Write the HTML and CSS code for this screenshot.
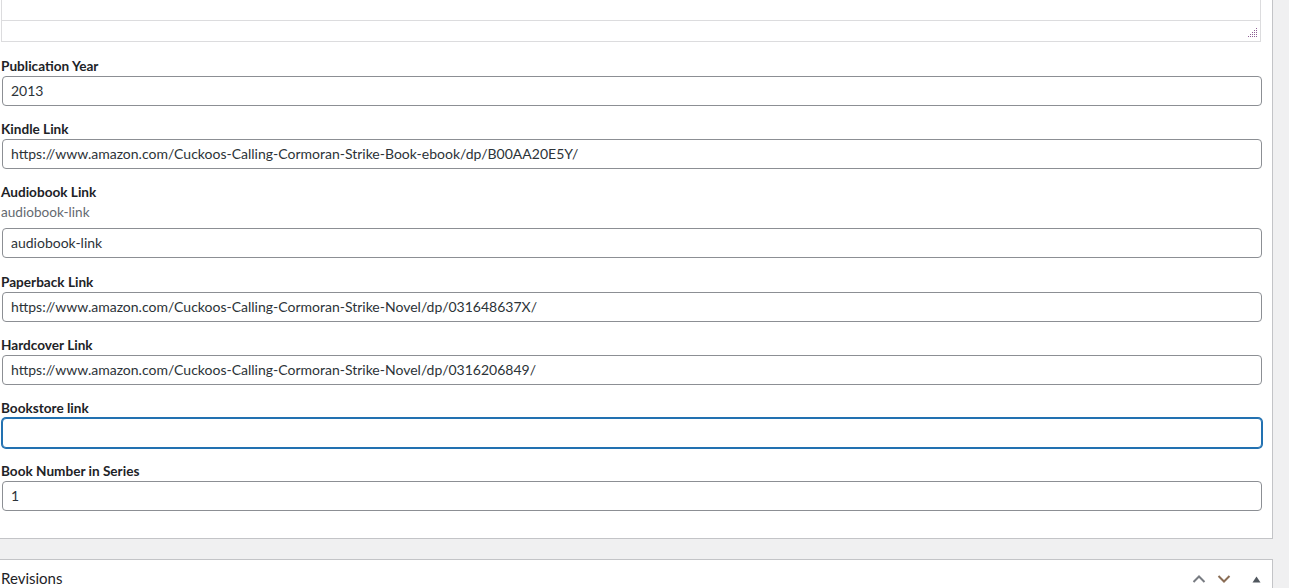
FILE: index.html
```html
<!DOCTYPE html>
<html lang="en">
<head>
    <meta charset="UTF-8">
    <meta name="viewport" content="width=device-width, initial-scale=1.0">
    <title>Edit Book</title>
    <link rel="stylesheet" href="styles.css">
</head>
<body>
    <div class="postbox book-fields">
        <div class="inside">
            <!-- editor tail: text area + status bar with grip -->
            <div class="editor">
                <div class="editor-area"></div>
                <div class="editor-status">
                    <svg class="grip" width="10" height="10" viewBox="0 0 10 10">
                        <rect x="8" y="0" width="1" height="1"/>
                        <rect x="6" y="2" width="1" height="1"/>
                        <rect x="8" y="2" width="1" height="1"/>
                        <rect x="4" y="4" width="1" height="1"/>
                        <rect x="6" y="4" width="1" height="1"/>
                        <rect x="8" y="4" width="1" height="1"/>
                        <rect x="2" y="6" width="1" height="1"/>
                        <rect x="4" y="6" width="1" height="1"/>
                        <rect x="6" y="6" width="1" height="1"/>
                        <rect x="8" y="6" width="1" height="1"/>
                        <rect x="0" y="8" width="1" height="1"/>
                        <rect x="2" y="8" width="1" height="1"/>
                        <rect x="4" y="8" width="1" height="1"/>
                        <rect x="6" y="8" width="1" height="1"/>
                        <rect x="8" y="8" width="1" height="1"/>
                    </svg>
                </div>
            </div>

            <div class="field">
                <label>Publication Year</label>
                <input type="text" value="2013">
            </div>
            <div class="field">
                <label>Kindle Link</label>
                <input type="text" value="https://www.amazon.com/Cuckoos-Calling-Cormoran-Strike-Book-ebook/dp/B00AA20E5Y/">
            </div>
            <div class="field has-desc">
                <label>Audiobook Link</label>
                <p class="description">audiobook-link</p>
                <input type="text" value="audiobook-link">
            </div>
            <div class="field">
                <label>Paperback Link</label>
                <input type="text" value="https://www.amazon.com/Cuckoos-Calling-Cormoran-Strike-Novel/dp/031648637X/">
            </div>
            <div class="field">
                <label>Hardcover Link</label>
                <input type="text" value="https://www.amazon.com/Cuckoos-Calling-Cormoran-Strike-Novel/dp/0316206849/">
            </div>
            <div class="field">
                <label>Bookstore link</label>
                <input type="text" class="is-focus" value="">
            </div>
            <div class="field">
                <label>Book Number in Series</label>
                <input type="text" value="1">
            </div>
        </div>
    </div>

    <div class="postbox revisions">
        <div class="postbox-header">
            <h2>Revisions</h2>
            <div class="handle-actions">
                <svg width="14" height="10" viewBox="0 0 14 10"><path d="M1.5 8 7 2.5 12.5 8" fill="none" stroke="#787c82" stroke-width="2"/></svg>
                <svg width="14" height="10" viewBox="0 0 14 10"><path d="M1.5 2 7 7.5 12.5 2" fill="none" stroke="#8a6d55" stroke-width="2"/></svg>
                <svg class="toggle" width="9" height="7" viewBox="0 0 9 7"><path d="M4.5 0.5 8.5 6.5H0.5Z" fill="#50575e"/></svg>
            </div>
        </div>
    </div>
</body>
</html>
```

FILE: styles.css
```css
body {
    margin: 0;
    background-color: #f0f0f1;
    font-family: Lato, "Liberation Sans", sans-serif;
    color: #1d2327;
    height: 588px;
    overflow: hidden;
}

.postbox {
    width: 1273px;
    background-color: #ffffff;
    border-right: 1px solid #c3c4c7;
    box-sizing: border-box;
}

.book-fields {
    border-bottom: 1px solid #c3c4c7;
    margin-bottom: 20px;
}

.inside {
    display: flex;
    flex-direction: column;
    padding: 0 11px 13px 1px;
}

.editor {
    width: 1260px;
    margin-top: -1px;
    border: 1px solid #dcdcde;
    border-top: none;
    box-sizing: border-box;
    margin-bottom: 15px;
}

.editor-area {
    height: 21px;
    border-bottom: 1px solid #dcdcde;
}

.editor-status {
    height: 20px;
    display: flex;
    justify-content: flex-end;
    align-items: flex-end;
    padding: 0 2px 3px 0;
    box-sizing: border-box;
}

.grip {
    fill: #8e5f94;
}

.field {
    display: flex;
    flex-direction: column;
    margin-bottom: 14px;
}

.field.has-desc {
    margin-bottom: 15px;
}

.field label {
    font-size: 13.6px;
    font-weight: 700;
    line-height: 18px;
    color: #1d2327;
    padding-bottom: 1px;
}

.field .description {
    margin: 1px 0 7px;
    font-size: 13.6px;
    line-height: 18px;
    color: #646970;
}

.field input {
    width: 1260px;
    height: 30px;
    margin-left: 1px;
    box-sizing: border-box;
    border: 1px solid #8c8f94;
    border-radius: 4px;
    padding: 0 8px 2px 8px;
    font-family: Lato, "Liberation Sans", sans-serif;
    font-size: 14px;
    color: #2c3338;
    background-color: #ffffff;
    outline: none;
}

.field input.is-focus {
    border-color: #2271b1;
    box-shadow: 0 0 0 1px #2271b1;
}

.revisions {
    border-top: 1px solid #c3c4c7;
}

.postbox-header {
    display: flex;
    align-items: center;
    justify-content: space-between;
    height: 36px;
}

.postbox-header h2 {
    margin: 0;
    padding-left: 1px;
    font-size: 15px;
    font-weight: 400;
    line-height: 1.4;
}

.handle-actions {
    display: flex;
    align-items: center;
    gap: 11px;
    padding: 2px 11px 0 0;
}

.handle-actions .toggle {
    margin-left: 10px;
}
```
